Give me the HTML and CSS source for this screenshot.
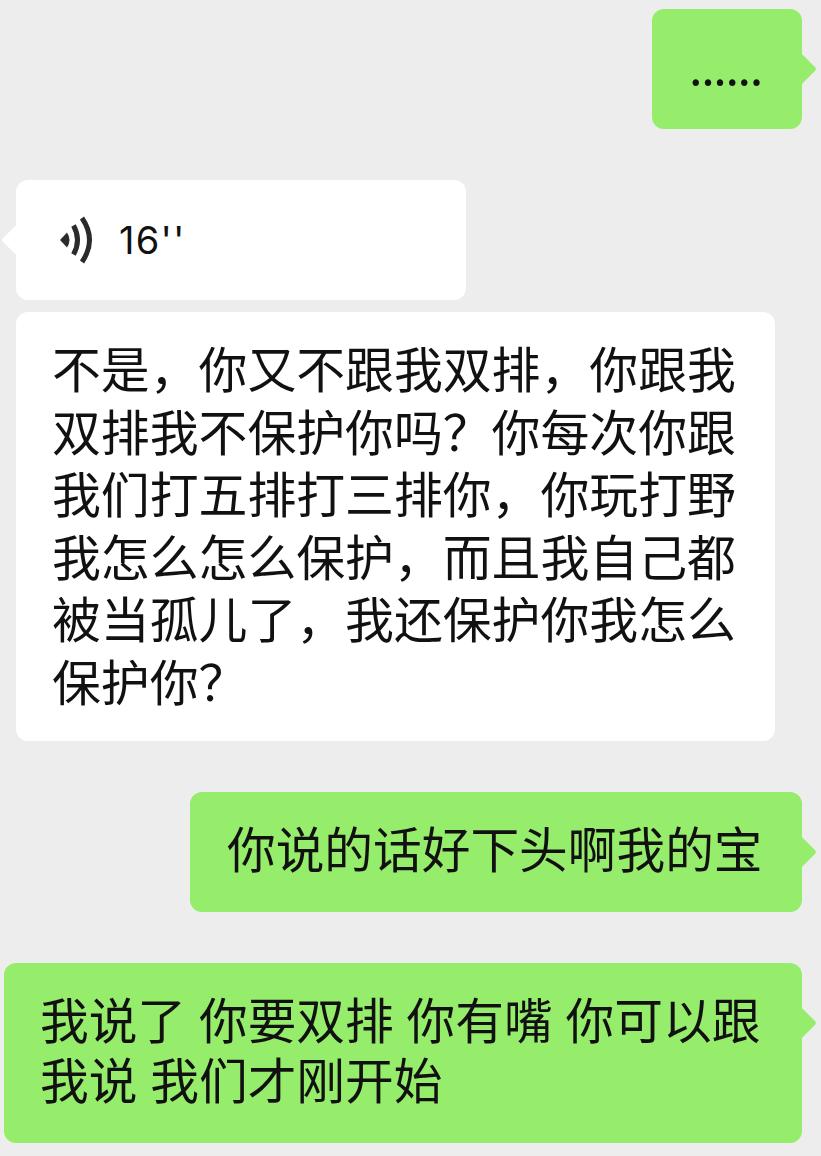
FILE: index.html
```html
<!DOCTYPE html>
<html lang="zh-CN">
  <head>
    <meta charset="UTF-8" />
    <meta name="viewport" content="width=device-width, initial-scale=1.0" />
    <title>聊天记录</title>
    <link rel="stylesheet" href="styles.css">
  </head>
  <body>
    <div class="chat">
      <div class="bubble sent dots">......</div>

      <div class="bubble received voice">
        <svg class="voice-icon" width="40" height="50" viewBox="0 0 40 50" fill="none">
          <path d="M4 25 L11 17.5 Q16 25 11 32.5 Z" fill="#2b2b2b" />
          <path d="M17.5 10.5 Q25.5 25 17.5 39.5" stroke="#2b2b2b" stroke-width="5" />
          <path d="M26 3 Q41 25 26 47" stroke="#2b2b2b" stroke-width="5" />
        </svg>
        <span class="voice-time">16''</span>
      </div>

      <div class="bubble received long">不是，你又不跟我双排，你跟我双排我不保护你吗？你每次你跟我们打五排打三排你，你玩打野我怎么怎么保护，而且我自己都被当孤儿了，我还保护你我怎么保护你？</div>

      <div class="bubble sent short">你说的话好下头啊我的宝</div>

      <div class="bubble sent wide">我说了 你要双排 你有嘴 你可以跟我说 我们才刚开始</div>
    </div>
  </body>
</html>
```

FILE: styles.css
```css
body {
  margin: 0;
  background-color: #ededed;
  font-family: "Noto Sans CJK SC", "Noto Sans", sans-serif;
}

.chat {
  display: flex;
  flex-direction: column;
  padding: 9px 19px 13px 16px;
}

.bubble {
  position: relative;
  box-sizing: border-box;
  margin-bottom: 51px;
  padding: 25px 37px 35px;
  border-radius: 12px;
  font-size: 48.7px;
  line-height: 60px;
  color: #111;
}

.bubble.sent {
  align-self: flex-end;
  background-color: #96ec6b;
}

.bubble.received {
  align-self: flex-start;
  background-color: #fff;
}

/* tails */
.bubble::after {
  content: "";
  position: absolute;
  top: 48px;
  width: 24px;
  height: 24px;
  border-radius: 3px;
  transform: rotate(45deg);
  background-color: inherit;
}

.sent::after {
  right: -10px;
}

.received::after {
  left: -10px;
}

.dots {
  width: 150px;
  padding-left: 37px;
  padding-right: 0;
  letter-spacing: -1.4px;
  white-space: nowrap;
}

.voice {
  display: flex;
  align-items: center;
  width: 450px;
  height: 120px;
  margin-bottom: 12px;
  padding: 0 0 0 40px;
}

.voice-icon {
  flex-shrink: 0;
}

.voice-time {
  margin-left: 23px;
  font-family: Inter, sans-serif;
  font-size: 38px;
  letter-spacing: 1.2px;
}

.long {
  width: 759px;
  padding: 24px 36px 30px;
  font-size: 48.85px;
  line-height: 62.5px;
}

.long::after {
  display: none;
}

.short {
  width: 612px;
}

.wide {
  width: 798px;
  margin-bottom: 0;
  padding-left: 36px;
  word-spacing: 2px;
}
```
